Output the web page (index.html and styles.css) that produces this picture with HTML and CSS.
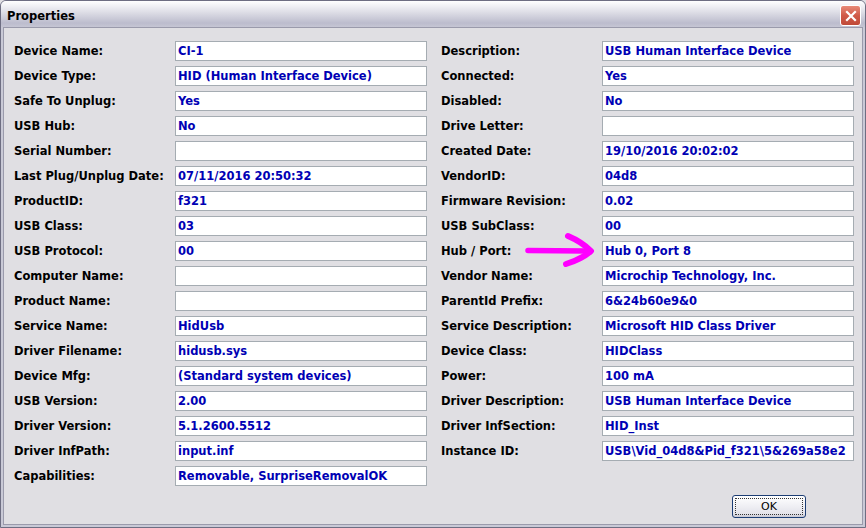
FILE: index.html
```html
<!DOCTYPE html>
<html lang="en">
<head>
    <meta charset="UTF-8">
    <title>Properties</title>
    <link rel="stylesheet" href="styles.css">
</head>
<body>
    <div class="window">
        <div class="titlebar">
            <span class="title">Properties</span>
            <button class="close" type="button" aria-label="Close">
                <svg width="12" height="12" viewBox="0 0 12 12">
                    <path d="M2 2 L10 10 M10 2 L2 10" stroke="#fff" stroke-width="2.2" stroke-linecap="square"/>
                </svg>
            </button>
        </div>
        <div class="client">
            <div class="props">
                <div class="col">
                    <label>Device Name:</label><div class="field">CI-1</div>
                    <label>Device Type:</label><div class="field">HID (Human Interface Device)</div>
                    <label>Safe To Unplug:</label><div class="field">Yes</div>
                    <label>USB Hub:</label><div class="field">No</div>
                    <label>Serial Number:</label><div class="field"></div>
                    <label>Last Plug/Unplug Date:</label><div class="field">07/11/2016 20:50:32</div>
                    <label>ProductID:</label><div class="field">f321</div>
                    <label>USB Class:</label><div class="field">03</div>
                    <label>USB Protocol:</label><div class="field">00</div>
                    <label>Computer Name:</label><div class="field"></div>
                    <label>Product Name:</label><div class="field"></div>
                    <label>Service Name:</label><div class="field">HidUsb</div>
                    <label>Driver Filename:</label><div class="field">hidusb.sys</div>
                    <label>Device Mfg:</label><div class="field">(Standard system devices)</div>
                    <label>USB Version:</label><div class="field">2.00</div>
                    <label>Driver Version:</label><div class="field">5.1.2600.5512</div>
                    <label>Driver InfPath:</label><div class="field">input.inf</div>
                    <label>Capabilities:</label><div class="field">Removable, SurpriseRemovalOK</div>
                </div>
                <div class="col">
                    <label>Description:</label><div class="field">USB Human Interface Device</div>
                    <label>Connected:</label><div class="field">Yes</div>
                    <label>Disabled:</label><div class="field">No</div>
                    <label>Drive Letter:</label><div class="field"></div>
                    <label>Created Date:</label><div class="field">19/10/2016 20:02:02</div>
                    <label>VendorID:</label><div class="field">04d8</div>
                    <label>Firmware Revision:</label><div class="field">0.02</div>
                    <label>USB SubClass:</label><div class="field">00</div>
                    <label>Hub / Port:</label><div class="field">Hub 0, Port 8</div>
                    <label>Vendor Name:</label><div class="field">Microchip Technology, Inc.</div>
                    <label>ParentId Prefix:</label><div class="field">6&amp;24b60e9&amp;0</div>
                    <label>Service Description:</label><div class="field">Microsoft HID Class Driver</div>
                    <label>Device Class:</label><div class="field">HIDClass</div>
                    <label>Power:</label><div class="field">100 mA</div>
                    <label>Driver Description:</label><div class="field">USB Human Interface Device</div>
                    <label>Driver InfSection:</label><div class="field">HID_Inst</div>
                    <label>Instance ID:</label><div class="field">USB\Vid_04d8&amp;Pid_f321\5&amp;269a58e2</div>
                </div>
            </div>
            <div class="footer">
                <button class="ok" type="button">OK</button>
            </div>
        </div>
        <!-- hand drawn marker pointing at the port field -->
        <svg class="arrow" width="80" height="40" viewBox="0 0 80 40">
            <path d="M8 20.5 L66 21" stroke="#ff00ff" stroke-width="5.5" stroke-linecap="round" fill="none"/>
            <path d="M48 6 Q62 12 71 21 Q62 29 46 34" stroke="#ff00ff" stroke-width="6" stroke-linecap="round" stroke-linejoin="round" fill="none"/>
        </svg>
    </div>
</body>
</html>
```

FILE: styles.css
```css
body {
    margin: 0;
    background-color: #e0dfe3;
    font-family: "DejaVu Sans", Tahoma, sans-serif;
    font-size: 11.5px;
}
.window {
    position: relative;
    width: 866px;
    height: 528px;
    box-sizing: border-box;
    border: 1px solid #6e6e82;
    border-radius: 6px 6px 0 0;
    background-color: #c9c9d6;
    display: flex;
    flex-direction: column;
    overflow: hidden;
}
.titlebar {
    height: 26px;
    flex-shrink: 0;
    display: flex;
    align-items: center;
    justify-content: space-between;
    padding: 0 4px 0 6px;
    background: linear-gradient(#ffffff 0%, #ececf1 25%, #d4d4df 55%, #bcbccd 85%, #c6c6d4 100%);
}
.title {
    font-weight: bold;
    font-size: 11.5px;
    color: #000;
    padding-top: 4px;
}
.close {
    width: 21px;
    height: 21px;
    padding: 0;
    margin-top: 3px;
    border: 1px solid #fff;
    border-radius: 3px;
    background: linear-gradient(#e88a78, #d05a48 50%, #c04a38);
    display: flex;
    align-items: center;
    justify-content: center;
}
.client {
    flex: 1;
    margin: 0 2px 2px;
    border: 1px solid #9a9aab;
    background-color: #e0dfe3;
    padding: 13px 0 0 10px;
    display: flex;
    flex-direction: column;
}
.props {
    display: flex;
    gap: 14px;
}
.col {
    display: grid;
    grid-template-columns: 161px 252px;
    grid-auto-rows: 20px;
    row-gap: 5px;
    align-content: start;
}
.col label {
    font-weight: bold;
    color: #000;
    line-height: 20px;
    white-space: nowrap;
}
.field {
    box-sizing: border-box;
    border: 1px solid #a5acb2;
    background-color: #fff;
    color: #0000b4;
    font-weight: bold;
    line-height: 18px;
    padding-left: 2px;
    white-space: nowrap;
    overflow: hidden;
}
.footer {
    display: flex;
    justify-content: flex-end;
    padding-right: 56px;
    margin-top: 9px;
}
.ok {
    width: 74px;
    height: 23px;
    border: 1px solid #1c3d74;
    border-radius: 3px;
    background: linear-gradient(#ffffff, #f2f2f6 40%, #e2e2ea 85%, #c8c8d4);
    font-family: "DejaVu Sans", Tahoma, sans-serif;
    font-size: 11px;
    color: #000;
    outline: 1px dotted #333;
    outline-offset: -4px;
    padding: 0;
}
.arrow {
    position: absolute;
    left: 519px;
    top: 229px;
}
```
